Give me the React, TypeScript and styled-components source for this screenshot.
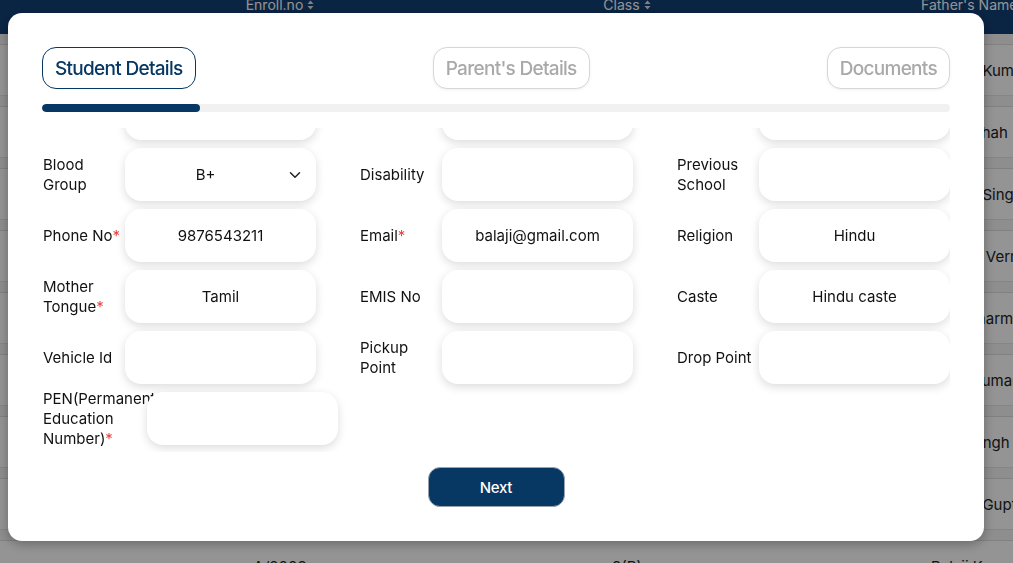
import React, { useLayoutEffect, useRef } from "react";
import styled, { createGlobalStyle } from "styled-components";
import { ChevronDown } from "lucide-react";

const GlobalStyle = createGlobalStyle`
  * { box-sizing: border-box; }
  html, body { margin: 0; padding: 0; }
  body {
    font-family: Inter, "Noto Sans", Arial, sans-serif;
    background: #ffffff;
    overflow: hidden;
  }
`;

const NAVY = "#073763";
const COLS = "180px 200px 160px 174px 197px 200px";

const Page = styled.div`
  position: relative;
  width: 1013px;
  height: 563px;
  overflow: hidden;
  background: #ffffff;
`;

/* ---------- background table ---------- */
const Table = styled.div`
  display: flex;
  flex-direction: column;
  width: 1111px;
  background: #f4f4f4;
`;

const HeadRow = styled.div`
  display: grid;
  grid-template-columns: ${COLS};
  height: 34px;
  background: #123f74;
  color: #ffffff;
  font-size: 14px;
  line-height: 14px;
  align-items: start;
`;

const HeadCell = styled.div<{ $align?: "center" | "left" }>`
  display: flex;
  align-items: center;
  gap: 4px;
  margin-top: -2px;
  justify-content: ${(p) => (p.$align === "left" ? "flex-start" : "center")};
  padding-left: ${(p) => (p.$align === "left" ? "10px" : "0")};
  white-space: nowrap;
`;

const Body = styled.div`
  display: flex;
  flex-direction: column;
  gap: 10px;
  padding-top: 10px;
`;

const BodyRow = styled.div`
  display: grid;
  grid-template-columns: ${COLS};
  height: 52px;
  align-items: center;
  background: #ffffff;
  border-top: 1px solid #dedede;
  border-bottom: 1px solid #e6e6e6;
  font-size: 15px;
  color: #222222;
`;

const BodyCell = styled.div<{ $align?: "center" | "left" }>`
  text-align: ${(p) => (p.$align === "left" ? "left" : "center")};
  padding-left: ${(p) => (p.$align === "left" ? "20px" : "0")};
  white-space: nowrap;
`;

const SortIcon = () => (
  <svg width="7" height="10" viewBox="0 0 7 10" aria-hidden="true">
    <path d="M3.5 0.5 L6.5 4 L0.5 4 Z" fill="currentColor" opacity="0.85" />
    <path d="M3.5 9.5 L6.5 6 L0.5 6 Z" fill="currentColor" opacity="0.85" />
  </svg>
);

/* ---------- modal ---------- */
const Backdrop = styled.div`
  position: fixed;
  inset: 0;
  background: rgba(0, 0, 0, 0.42);
  padding: 13px 29px 22px 8px;
  display: flex;
  align-items: flex-start;
`;

const Modal = styled.div`
  width: 976px;
  flex: 0 0 976px;
  height: 528px;
  background: #ffffff;
  border-radius: 14px;
  box-shadow: 0 3px 12px rgba(0, 0, 0, 0.3);
  padding: 34px;
  display: flex;
  flex-direction: column;
`;

const Tabs = styled.div`
  display: flex;
  justify-content: space-between;
  align-items: center;
  height: 42px;
`;

const Tab = styled.button<{ $active?: boolean }>`
  height: 42px;
  padding: 0 12px;
  border-radius: 14px;
  border: 1px solid ${(p) => (p.$active ? NAVY : "#d6d6d6")};
  background: #ffffff;
  color: ${(p) => (p.$active ? NAVY : "#a9a9a9")};
  font-family: Inter, "Noto Sans", sans-serif;
  font-size: 19px;
  font-weight: 500;
  letter-spacing: -0.7px;
  cursor: pointer;
  box-shadow: ${(p) => (p.$active ? "none" : "0 1px 3px rgba(0,0,0,0.06)")};
`;

const Track = styled.div`
  margin-top: 15px;
  height: 8px;
  border-radius: 4px;
  background: #f1f1f1;
  overflow: hidden;
`;

const Fill = styled.div<{ $pct: number }>`
  width: ${(p) => p.$pct}%;
  height: 100%;
  border-radius: 4px;
  background: ${NAVY};
`;

const FormScroll = styled.div`
  margin-top: 16px;
  height: 324px;
  overflow-y: auto;
  overflow-x: hidden;
  scrollbar-width: none;
  &::-webkit-scrollbar { display: none; }
`;

const FormGrid = styled.div`
  display: grid;
  grid-template-columns: repeat(3, 274px);
  column-gap: 43px;
  row-gap: 8px;
  padding: 8px 0 7px;
`;

const Field = styled.div`
  display: flex;
  align-items: center;
  height: 53px;
`;

const Label = styled.label<{ $wide?: boolean }>`
  flex: 0 0 ${(p) => (p.$wide ? "105px" : "83px")};
  width: ${(p) => (p.$wide ? "105px" : "83px")};
  padding-left: 1px;
  font-size: 15px;
  line-height: 20px;
  color: #111111;
  white-space: normal;
  overflow: visible;
`;

const Req = styled.span`
  color: #ef3d3d;
`;

const Input = styled.input`
  flex: 0 0 191px;
  width: 191px;
  height: 53px;
  border: none;
  outline: none;
  border-radius: 16px;
  background: #ffffff;
  box-shadow: 0 3px 10px rgba(0, 0, 0, 0.14);
  text-align: center;
  font-family: Inter, "Noto Sans", sans-serif;
  font-size: 15px;
  color: #111111;
  padding: 0 10px;
`;

const Select = styled.div`
  flex: 0 0 191px;
  width: 191px;
  height: 53px;
  border-radius: 16px;
  background: #ffffff;
  box-shadow: 0 3px 10px rgba(0, 0, 0, 0.14);
  display: flex;
  align-items: center;
  padding: 0 12px 0 0;
  font-size: 15px;
  color: #111111;
  cursor: pointer;
`;

const SelectValue = styled.span`
  flex: 1;
  text-align: center;
`;

const Footer = styled.div`
  margin-top: 15px;
  display: flex;
  justify-content: center;
`;

const NextButton = styled.button`
  width: 137px;
  height: 40px;
  border-radius: 12px;
  border: 1px solid #9aa3ad;
  background: ${NAVY};
  color: #ffffff;
  font-family: Inter, "Noto Sans", sans-serif;
  font-size: 15px;
  font-weight: 500;
  letter-spacing: -0.3px;
  cursor: pointer;
`;

type FieldDef = {
  label: string;
  required?: boolean;
  value?: string;
  select?: boolean;
  wide?: boolean;
};

const fields: FieldDef[] = [
  { label: "Student Name", required: true, value: "Balaji" },
  { label: "Date of Birth", required: true, value: "12-05-2012" },
  { label: "Gender", required: true, value: "Male", select: true },
  { label: "Admission No", required: true, value: "A/2008" },
  { label: "Class", required: true, value: "8", select: true },
  { label: "Section", required: true, value: "B", select: true },
  { label: "Aadhar No", value: "" },
  { label: "Nationality", value: "Indian" },
  { label: "Community", value: "" },
  { label: "Blood Group", value: "B+", select: true },
  { label: "Disability", value: "" },
  { label: "Previous School", value: "" },
  { label: "Phone No", required: true, value: "9876543211" },
  { label: "Email", required: true, value: "balaji@gmail.com" },
  { label: "Religion", value: "Hindu" },
  { label: "Mother Tongue", required: true, value: "Tamil" },
  { label: "EMIS No", value: "" },
  { label: "Caste", value: "Hindu caste" },
  { label: "Vehicle Id", value: "" },
  { label: "Pickup Point", value: "" },
  { label: "Drop Point", value: "" },
  { label: "PEN(Permanent Education Number)", required: true, value: "", wide: true },
];

const rows = [
  ["A/2000", "1(A)", "Rajesh Kumar"],
  ["A/2001", "2(A)", "Kiran Shah"],
  ["A/2002", "3(B)", "Rajesh Singh"],
  ["A/2003", "4(A)", "Naresh Verma"],
  ["A/2004", "5(C)", "Amit Sharma"],
  ["A/2005", "6(A)", "Kiran Kumar"],
  ["A/2006", "7(B)", "Vijay Singh"],
  ["A/2007", "7(A)", "Rajesh Gupta"],
  ["A/2008", "8(B)", "Balaji Kumar"],
];

export default function App() {
  const scrollRef = useRef<HTMLDivElement>(null);

  useLayoutEffect(() => {
    if (scrollRef.current) {
      scrollRef.current.scrollTop = scrollRef.current.scrollHeight;
    }
  }, []);

  return (
    <Page>
      <GlobalStyle />
      <Table>
        <HeadRow>
          <HeadCell />
          <HeadCell>
            Enroll.no <SortIcon />
          </HeadCell>
          <HeadCell />
          <HeadCell>
            Class <SortIcon />
          </HeadCell>
          <HeadCell />
          <HeadCell $align="left">Father's Name</HeadCell>
        </HeadRow>
        <Body>
          {rows.map((r, i) => (
            <BodyRow key={i}>
              <BodyCell />
              <BodyCell>{r[0]}</BodyCell>
              <BodyCell />
              <BodyCell>{r[1]}</BodyCell>
              <BodyCell />
              <BodyCell $align="left">{r[2]}</BodyCell>
            </BodyRow>
          ))}
        </Body>
      </Table>

      <Backdrop>
        <Modal role="dialog">
          <Tabs>
            <Tab $active>Student Details</Tab>
            <Tab>Parent's Details</Tab>
            <Tab>Documents</Tab>
          </Tabs>
          <Track>
            <Fill $pct={17.4} />
          </Track>
          <FormScroll ref={scrollRef}>
            <FormGrid>
              {fields.map((f) => (
                <Field key={f.label}>
                  <Label $wide={f.wide}>
                    {f.label}
                    {f.required && <Req>*</Req>}
                  </Label>
                  {f.select ? (
                    <Select>
                      <SelectValue>{f.value}</SelectValue>
                      <ChevronDown size={18} strokeWidth={2} color="#222" />
                    </Select>
                  ) : (
                    <Input defaultValue={f.value} readOnly />
                  )}
                </Field>
              ))}
            </FormGrid>
          </FormScroll>
          <Footer>
            <NextButton>Next</NextButton>
          </Footer>
        </Modal>
      </Backdrop>
    </Page>
  );
}
